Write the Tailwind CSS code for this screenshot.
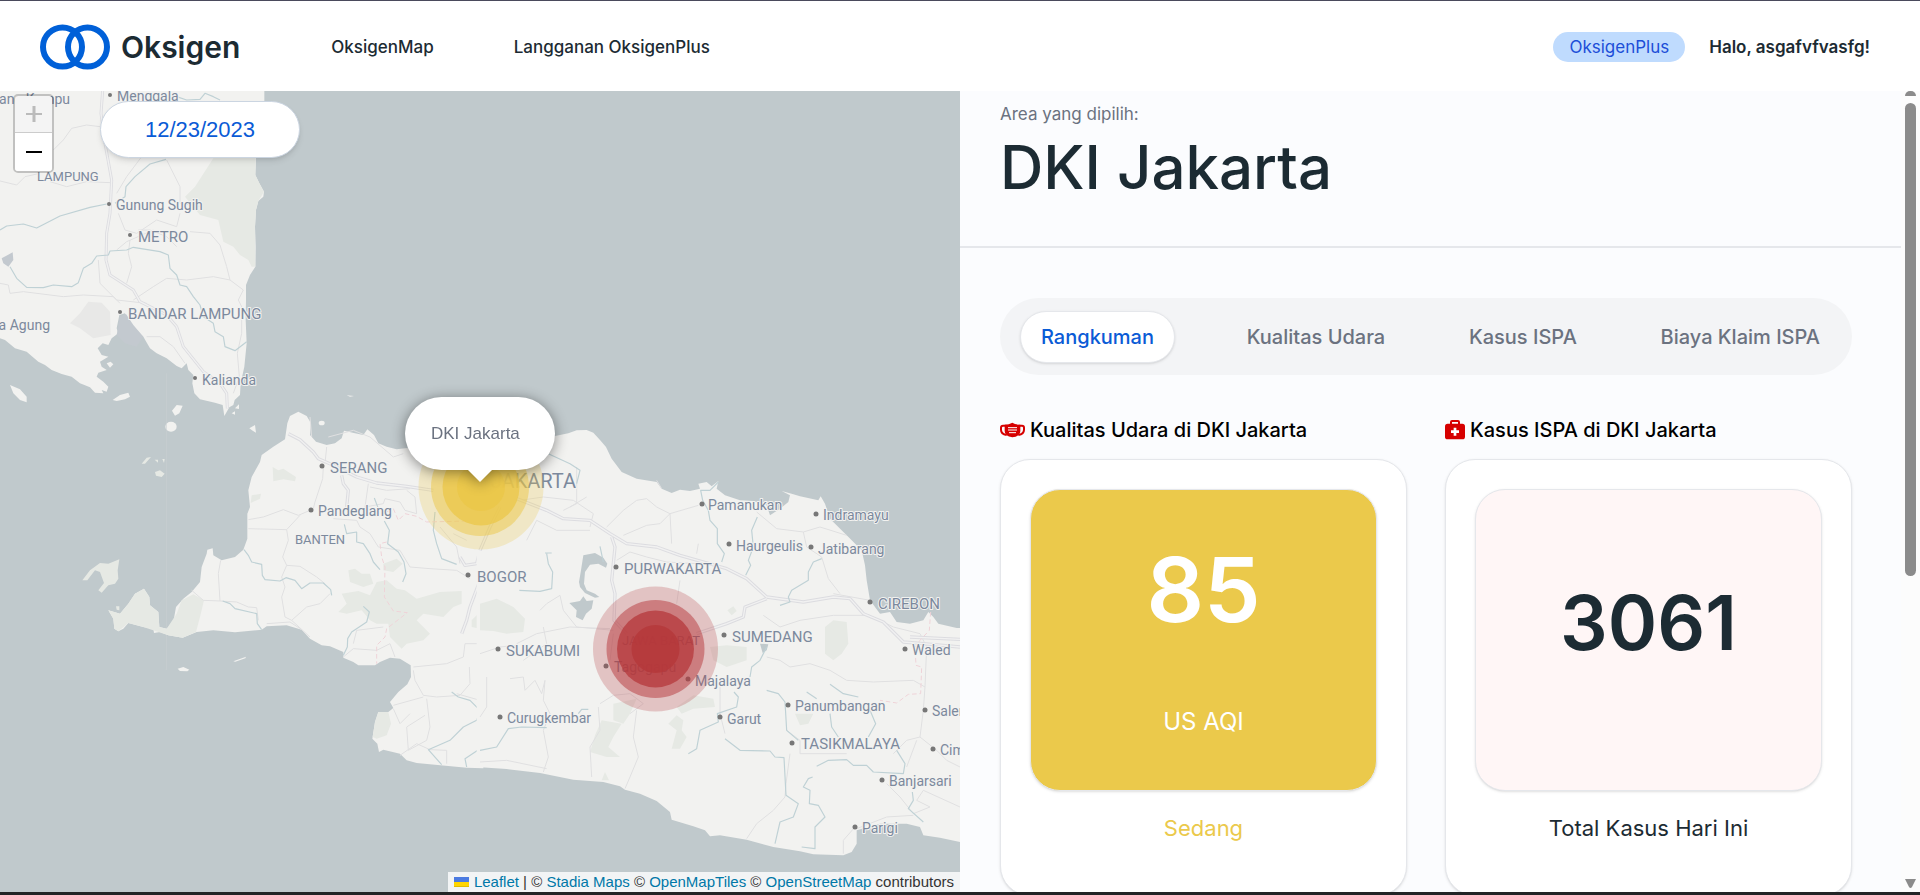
<!DOCTYPE html>
<html lang="id">
<head>
<meta charset="utf-8">
<title>Oksigen</title>
<script src="https://cdn.jsdelivr.net/npm/@tailwindcss/browser@4"></script>
</head>
<body class="flex h-screen flex-col overflow-hidden bg-white font-['Inter',sans-serif] text-[#1c2b33]">

<header class="flex h-[91px] shrink-0 items-center border-t border-[#4a4a5c] bg-white pt-0.5 pr-[50px] pl-10">
  <a href="#" class="flex items-center gap-[11px]">
    <svg class="h-[46px] w-[70px]" viewBox="0 0 70 46" fill="none" stroke="#0060d8" stroke-width="6" aria-hidden="true"><circle cx="22.500" cy="23" r="19.500"/><circle cx="47.500" cy="23" r="19.500"/></svg>
    <span class="text-[30px] leading-9 font-semibold">Oksigen</span>
  </a>
  <nav class="ml-[91px] flex items-center gap-20 text-[17px] leading-6 font-medium">
    <a href="#">OksigenMap</a>
    <a href="#">Langganan OksigenPlus</a>
  </nav>
  <div class="ml-auto flex items-center gap-6 text-[17px]">
    <a href="#" class="rounded-full bg-[#bfdbfe] px-4 leading-[30px] font-normal text-[#1d4ed8]">OksigenPlus</a>
    <span class="leading-[30px] font-semibold">Halo, asgafvfvasfg!</span>
  </div>
</header>

<main class="grid min-h-0 flex-1 grid-cols-2">

  <section class="relative overflow-hidden bg-[#c0c9cc]" aria-label="Peta">
    <svg class="absolute inset-0 h-full w-full" viewBox="0 91 960 801" preserveAspectRatio="xMidYMid slice" aria-label="Peta Jawa Barat dan Lampung">
      <!-- Sumatra -->
      <g transform="scale(.333333)" fill="none" stroke-linejoin="round">
        <path fill="#f2f2f0" d="M0 270H793V310L780 400 768 475 766 525 778 550 792 575 790 590 775 603 768 630 765 680 767 740 766 800 750 825 738 855 738 900 737 960 740 1030 737 1060 733 1100 722 1150 720 1185 704 1200 700 1215 688 1222 673 1248 668 1215 645 1208 600 1198 583 1180 577 1150 580 1125 565 1110 560 1090 545 1105 530 1098 500 1075 470 1060 450 1045 430 1010 400 980 385 965 375 940 358 945 350 985 355 1000 335 1015 325 1035 308 1030 293 1045 305 1065 325 1070 300 1085 305 1100 320 1110 295 1118 290 1130 310 1145 325 1160 320 1175 305 1170 310 1180 285 1178 270 1162 240 1150 215 1130 185 1122 155 1110 135 1095 115 1085 80 1055 45 1045 15 1020 0 1015Z"/>
        <g fill="#f2f2f0"><path d="M30 1155 60 1168 80 1190V1207L60 1200 40 1180ZM338 1200 360 1185 385 1178 390 1190 375 1198 350 1203ZM516 1232 530 1215 548 1217 538 1240 525 1247ZM748 1285 765 1275 768 1298 758 1292ZM1040 1186 1062 1188 1050 1190ZM1480 1267H1487V1271ZM320 1090l12-5 8 8-10 10zM705 1225l12-12v14zM695 1240l10-6v10z"/><ellipse cx="513" cy="1280" rx="17" ry="15"/><ellipse cx="965" cy="1269" rx="9" ry="7"/></g>
        <path fill="#e6e9e4" d="M640 475H767L766 525 778 550 792 575 775 603 768 630 765 680 766 800 755 800 745 780 720 765 700 740 670 725 655 660 600 645 555 590 585 560Z"/>
        <path fill="#e8e8e7" d="M265 905 305 908 330 935 332 1005 280 1015 240 985 210 970 240 940Z"/>
        <path fill="#c3c9cf" d="M5 775 38 757 40 780 25 800 10 790ZM360 950 378 942 400 975 430 1010 410 1040 375 1030 350 1005Z"/>
        <g stroke="#e0e0e1" stroke-width="3">
          <path d="M0 543 50 555 75 530 120 520M0 850 25 855 30 880 70 875 190 890 250 885 340 890 360 910M160 450 190 420 215 385 260 375 300 380M150 545 200 560 260 545 330 548M350 580 380 530 410 490 440 450M500 480 540 560 540 610 600 620M355 640 375 690 410 700 470 660 530 680 540 640M415 690 450 690 500 710 530 740M570 695 630 700 660 735 680 800 690 840 730 870 715 900 735 940M390 720 385 760 395 800 380 850M400 900 460 860 500 835 560 840 640 830 690 840M350 750 380 725 460 690M295 780 300 850 350 900 440 910M440 1010 480 1010 520 1040 555 1090M725 930V1000L712 1060 718 1130 700 1180"/>
        </g>
        <path stroke="#dcdce0" stroke-width="9" d="M308 270 303 340 315 430 335 540 330 640 320 700 318 780 330 825 400 870 420 905 500 945 530 980 550 1040 610 1115 660 1150 680 1180 682 1225"/>
        <path stroke="#f1f1f1" stroke-width="4" d="M308 270 303 340 315 430 335 540 330 640 320 700 318 780 330 825 400 870 420 905 500 945 530 980 550 1040 610 1115 660 1150 680 1180 682 1225"/>
        <g stroke="#bfd1d5" stroke-width="3.500">
          <path d="M0 690 20 678 70 672 110 684 180 648 270 622 320 612 M345 610 375 590 378 560 405 530 450 492 498 478"/>
          <path d="M30 800 50 835 80 862 130 863 160 855 215 860 235 848 250 805 275 790 290 768 325 765 330 753 380 750 400 742 480 755 505 765 510 805 530 825 540 855 560 860 580 890 600 915 610 950 640 970 645 995 670 1010 675 1040 705 1052 740 1025"/>
          <path d="M530 290 560 300 600 298 615 280 640 290 660 300"/>
        </g>
        <path stroke="#c9cfd1" stroke-width="2" d="M499 1120V2010"/>
      </g>
      <!-- West Java -->
      <g transform="translate(0 447) scale(.333333)" fill="none" stroke-linejoin="round">
        <path fill="#f2f2f0" d="M785 24 820 -1 855 -23 862 -71 870 -93 895 -106 920 -93 933 -71 930 -36 948 -16 980 -6 1005 -11 1025 -26 1032 -49 1065 -41 1090 -36 1102 -53 1122 -36 1135 -11 1160 -1 1190 7 1215 4 1300 0H1450V964L1400 962 1250 948 1220 940 1200 920 1150 908 1137 915 1132 890 1117 875 1125 825 1135 795 1165 795 1180 783 1170 765 1195 735 1222 712 1233 690 1232 655 1200 635 1170 632 1140 645 1125 655 1075 655 1060 645 1030 632V615L990 598 965 595 930 575 905 548 860 535 800 538 785 548 705 556 640 550 590 555 548 572 505 565 480 555 462 558 460 545 430 540 385 528 370 545 355 553 343 545 340 515 325 490 360 500 385 470 405 440 432 425 448 450 450 475 475 495 478 540 500 545 520 525 528 480 550 455 575 435 600 405 605 360 620 320 622 308 638 304 640 325 665 340 705 330 730 308 742 275 742 200 750 180 745 130 755 90 780 45Z"/>
        <path fill="#f2f2f0" d="M533 665 550 660 568 668 562 673 540 672ZM700 643 738 629 736 634 706 644Z"/>
        <g fill="#e6e9e4">
          <path d="M247 400 270 370 300 348 325 350 358 337 353 370 355 395 345 410 325 415 305 437 295 430 312 408 300 375 285 370 262 400ZM325 490 360 500 385 470 405 440 432 425 448 450 450 475 475 495 478 540 500 545 530 500 545 460 580 442 612 460 600 510 588 555 548 572 505 565 430 540 385 528 355 553 343 545 340 515ZM425 50 440 32 453 30 435 50ZM465 75 480 70 494 80 485 90 468 86ZM348 478 358 478 358 490 350 488ZM464 38 474 38 474 47ZM487 36 494 36 492 48Z"/>
          <path d="M818 60 835 70 850 65 888 90 885 103 850 97 820 103ZM755 145 783 140 780 155 752 168ZM1045 370 1065 365 1085 380 1110 380 1120 410 1090 420 1050 405ZM1150 350 1190 335 1208 350 1180 375 1150 370ZM1015 495 1040 470 1025 440 1075 432 1110 445 1130 405 1160 400 1190 425 1215 430 1250 455 1320 435 1385 432 1385 470 1360 480 1330 510 1270 500 1250 520 1290 560 1270 580 1220 590 1205 605 1170 570 1165 530 1130 530 1110 520 1085 490 1040 500Z"/>
          <path d="M1135 795 1165 795 1173 830 1160 865 1130 875 1118 870 1125 825ZM1415 520 1440 495V545L1415 540Z"/>
        </g>
        <g stroke="#e0e0e1" stroke-width="3">
          <path d="M970 60 968 95 945 165 940 185M745 218 790 210 850 188 895 205 935 188M745 245 860 248 900 205M860 248 865 280 848 330 860 355 845 390 855 420 845 450 855 510 875 520 920 480 960 470 990 440M860 355 900 358 950 390 975 410M575 430 610 460 660 462 655 380 662 340M660 462 710 465 745 480 770 482 775 520M800 530 870 525 905 548M875 520 930 570M1105 110 1095 180 1150 170 1155 155 1200 165 1215 190 1250 200 1245 150 1220 130M1110 120 1160 130 1230 125M980 0 975 50M985 -30 1060 -50 1110 -30 1180 30 1210 20M935 -30 930 -90M1000 215 1070 220 1080 240 1110 260 1135 300 1200 310 1230 360 1290 365 1370 370 1410 395M1060 590 1070 550 1150 540M1030 630 1060 605 1130 610 1170 590 1185 630M1240 660 1340 650 1390 630 1395 590 1440 590M1240 670 1245 700 1270 745 1310 750 1380 745 1410 710 1408 660M1180 775 1270 750M1280 755 1290 840 1280 880 1225 910 1220 840 1275 805M1180 785 1200 830 1230 800M1200 925 1250 890 1290 908 1340 910V950M1370 740 1440 760M1320 240 1370 300 1380 350M1360 260 1400 280"/>
        </g>
        <path stroke="#dcdce0" stroke-width="10" d="M865 -40 900 -22 940 15 955 35 1000 55 1070 90 1130 108 1220 118 1300 130M1025 85 1030 110 1045 130 1040 180M1380 330 1395 355 1430 350 1440 310M1440 400 1410 480 1400 520 1385 560"/>
        <path stroke="#f1f1f1" stroke-width="4" d="M865 -40 900 -22 940 15 955 35 1000 55 1070 90 1130 108 1220 118 1300 130M1025 85 1030 110 1045 130 1040 180M1380 330 1395 355 1430 350 1440 310M1440 400 1410 480 1400 520 1385 560"/>
        <path stroke="#bfd1d5" stroke-width="3.500" d="M732 308 745 325 755 345 785 352 787 385 795 398 840 402 858 392 885 400 905 425 930 408 970 408 992 428 995 445M668 462 690 470 705 485 770 500 772 530 785 548M1123 153 1135 185M1033 232 1040 260 1070 255 1070 285 1090 290 1110 320 1120 345 1140 368M1153 222 1168 250 1163 290 1195 315 1212 345 1218 380 1208 405M1090 478 1108 495 1100 525 1055 555 1043 575 1042 600 1030 625M1305 195 1300 250 1310 290 1325 335 1370 352M1355 735 1375 750 1410 760 1440 790 1430 820 1390 840 1350 880 1285 908 1325 953M1400 960 1395 935 1440 905"/>
        <path stroke="#efd3d8" stroke-width="3" stroke-dasharray="14 8" d="M1160 195 1180 185 1195 220 1215 200 1250 208 1280 225 1400 222M1160 285 1140 290 1145 330 1155 360 1153 450 1180 492 1222 497 1160 545 1155 570 1130 595 1130 650"/>
      </g>
      <!-- Central and east -->
      <g transform="translate(480 447) scale(.333333)" fill="none" stroke-linejoin="round">
        <path fill="#f2f2f0" d="M-10 0 225 -33 265 -41 290 -50 320 -51 340 -43 360 -21 378 0 395 35 425 75 470 95 530 105 545 125 575 138 600 128 630 132 660 125 655 110 680 105 695 118 715 102 710 125 735 145 780 160 820 162 860 175 870 205 900 185 925 165 930 145 905 132 935 140 960 148 1015 160 1022 148 1035 170 1050 215 1100 265 1145 310 1155 355 1160 400 1170 460 1200 500 1230 495 1250 525 1290 530 1330 520 1345 495 1360 510 1375 530 1430 543H1450V1187L1380 1172 1330 1165 1320 1140 1280 1130 1200 1130 1130 1150V1190L1115 1215 1090 1225 1000 1222 960 1213 880 1200 800 1178 720 1165 690 1168 675 1150 640 1138 575 1118 570 1095 530 1062 480 1040 435 1028 420 1018 370 1005 280 998 180 978 80 966 -10 960Z"/>
        <path fill="#c0c9cc" d="M310 325 345 318 370 332 382 350 378 362 355 350 330 353 315 375 312 410 320 430 345 440 358 450 345 452 315 438 300 420 297 405 303 370ZM268 468 300 462 310 448 320 462 340 460 335 485 318 500 308 520 288 510 290 490ZM840 590 865 592 860 610 848 618Z"/>
        <path fill="#e6e9e4" d="M0 470 50 455 100 480 135 515 130 555 80 560 40 552 0 550ZM1035 540 1060 520 1100 525 1105 590 1085 620 1060 640 1035 620ZM690 600 740 595 800 600 800 640 740 660 700 640ZM742 490 760 478 770 492 755 505ZM400 770 470 755 450 800 430 830 400 820ZM365 820 425 830 400 870 385 900 420 930 380 930 330 915 345 865ZM590 780 640 745 700 755 705 780 640 785 605 800ZM565 830 590 805 610 820 605 850 620 870 600 905 575 905 590 850ZM945 800 1000 800 985 830 960 835ZM365 1000 375 975 387 1000Z"/>
        <path stroke="#e0e0e1" stroke-width="3" d="M380 240 430 190 470 160 500 155 530 180 570 200 575 290M430 265 500 235 540 230 570 200 655 175M530 100 545 125M830 195 890 245 970 255 1020 240 1100 265M970 255 980 300 1025 330 1045 395 1080 440M410 340 450 315 500 330 560 345 650 350M655 290 650 320M120 160 190 150 280 160 340 200 330 240M270 180 320 150M290 60V170L250 190M140 280 170 220 230 250 330 250M180 490 200 470 240 445 250 490 290 540 400 550M110 590 170 560 270 540 390 545M130 640 200 590 190 540M390 640 400 560M0 620 60 600 110 595M20 690 20 780 0 810M90 695 130 690 135 730 165 700 185 740 195 700 190 760 210 800 190 850 205 930 190 975M360 770 400 745 450 740 490 770M355 780 360 850 330 900 335 990M470 790 460 870 475 930 450 990 435 1025M720 720V800L735 860M800 1175 830 1130 880 1090 915 1050 918 1010 930 920M1060 440 1170 460M860 630 900 640 930 660 990 650 1050 670 1100 700 1180 705 1300 700 1335 720M1180 510 1240 540 1320 560 1340 600 1335 720 1330 790 1320 870M850 505 900 540 960 520 1060 505 1170 505M1320 870 1280 880 1240 920M1320 870 1370 910 1400 940 1440 960M1220 1010 1260 1050 1300 1100M1300 1100 1350 1080 1310 1060 1330 1030 1440 1080M1090 1220 1090 1180 1125 1140M1130 1145 1220 1110 1300 1105M0 945 80 940 200 965M920 850 960 880 960 920 1100 920M1310 880 1280 960M490 770 450 800M600 400 590 470"/>
        <path stroke="#dcdce0" stroke-width="10" d="M110 155 200 190 250 215 330 220 390 260 440 290 530 300 600 325 740 365 800 395 860 450 970 465 1060 450 1110 455 1150 500 1210 525 1270 585 1330 590 1440 600M395 270 405 300 395 400 405 440 402 520 440 560M860 455 795 480 790 510 740 530 650 560M1290 570 1440 577M0 310 30 240 60 180"/>
        <path stroke="#f1f1f1" stroke-width="4" d="M110 155 200 190 250 215 330 220 390 260 440 290 530 300 600 325 740 365 800 395 860 450 970 465 1060 450 1110 455 1150 500 1210 525 1270 585 1330 590 1440 600M395 270 405 300 395 400 405 440 402 520 440 560M860 455 795 480 790 510 740 530 650 560M1290 570 1440 577M0 310 30 240 60 180"/>
        <path stroke="#bfd1d5" stroke-width="3.500" d="M205 20 270 50 300 70 290 110M195 318 215 318M200 320 205 350 218 375 215 425 180 433 118 430M360 298 370 345M715 105 690 130 662 130 668 160 685 190 690 220 712 245 712 290 733 320 725 345M832 210 815 250 820 300 805 340 812 355 797 385M1025 335 1000 345 985 375 985 400 935 430 925 450 930 465 900 475M860 600 840 640 815 660 810 690M762 735 775 750 770 780 712 800 715 825 660 850 650 905 625 920M735 875 780 910 870 912 885 930 912 932 918 1045 955 1070 940 1110 900 1125 885 1190M860 730 895 740 915 765 920 850 955 880M980 735 1010 755M1050 712 1090 740 1135 750M1050 800 1055 840 1075 870M1170 790 1187 830 1165 870M1010 958 1045 940 1100 938 1120 955 1160 955 1180 975 1270 980 1275 950 1250 910M998 990 985 995 970 1020 990 1030 988 1070 1015 1075 1035 1110 1005 1140 1005 1205 965 1200M1297 1035 1300 1060 1285 1085 1330 1125M0 910 50 900 85 845 125 840 200 842M295 800 305 787 325 787"/>
        <path stroke="#efd3d8" stroke-width="3" stroke-dasharray="14 8" d="M1352 495 1348 550 1320 580 1305 600 1308 655 1325 660 1322 740 1285 742 1250 768 1200 760"/>
      </g>
      <!-- Place names, 1 unit = 1px -->
      <g font-family="Roboto, sans-serif" fill="#7c899d" stroke="#f2f2f0" stroke-width="2" stroke-linejoin="round" paint-order="stroke" font-size="14">
        <text x="70" y="104" text-anchor="end">ang Kampu</text>
        <text x="117" y="101">Menggala</text>
        <text x="37" y="181" font-size="13">LAMPUNG</text>
        <text x="116" y="210">Gunung Sugih</text>
        <text x="50" y="330" text-anchor="end">ta Agung</text>
        <text x="202" y="385">Kalianda</text>
        <text x="318" y="516">Pandeglang</text>
        <text x="295" y="544" font-size="13">BANTEN</text>
        <text x="708" y="510">Pamanukan</text>
        <text x="823" y="520">Indramayu</text>
        <text x="736" y="551">Haurgeulis</text>
        <text x="818" y="554">Jatibarang</text>
        <text x="912" y="655">Waled</text>
        <text x="695" y="686">Majalaya</text>
        <text x="614" y="672">Tagogapu</text>
        <text x="622" y="645" font-size="13">JAWA BARAT</text>
        <text x="507" y="723">Curugkembar</text>
        <text x="727" y="724">Garut</text>
        <text x="795" y="711">Panumbangan</text>
        <text x="932" y="716">Salem</text>
        <text x="940" y="755">Cimanggu</text>
        <text x="889" y="786">Banjarsari</text>
        <text x="862" y="833">Parigi</text>
        <g font-size="15">
          <text x="138" y="242">METRO</text>
          <text x="128" y="319">BANDAR LAMPUNG</text>
          <text x="330" y="473">SERANG</text>
          <text x="477" y="582">BOGOR</text>
          <text x="624" y="574">PURWAKARTA</text>
          <text x="878" y="609">CIREBON</text>
          <text x="732" y="642">SUMEDANG</text>
          <text x="506" y="656">SUKABUMI</text>
          <text x="801" y="749">TASIKMALAYA</text>
        </g>
        <text x="576" y="488" font-size="20" text-anchor="end">JAKARTA</text>
      </g>
      <g fill="#777">
        <circle cx="110" cy="95" r="2"/><circle cx="109" cy="204" r="2"/><circle cx="130" cy="235" r="2"/><circle cx="120" cy="312" r="2"/><circle cx="195" cy="378" r="2"/><circle cx="322" cy="466" r="2.500"/><circle cx="311" cy="510" r="2.500"/><circle cx="468" cy="575" r="2.500"/><circle cx="702" cy="504" r="2.500"/><circle cx="816" cy="514" r="2.500"/><circle cx="729" cy="544" r="2.500"/><circle cx="811" cy="547" r="2.500"/><circle cx="616" cy="567" r="2.500"/><circle cx="870" cy="602" r="2.500"/><circle cx="724" cy="635" r="2.500"/><circle cx="905" cy="649" r="2.500"/><circle cx="498" cy="649" r="2.500"/><circle cx="606" cy="666" r="2.500"/><circle cx="688" cy="679" r="2.500"/><circle cx="500" cy="717" r="2.500"/><circle cx="720" cy="717" r="2.500"/><circle cx="788" cy="705" r="2.500"/><circle cx="925" cy="710" r="2.500"/><circle cx="933" cy="749" r="2.500"/><circle cx="792" cy="743" r="2.500"/><circle cx="882" cy="780" r="2.500"/><circle cx="855" cy="827" r="2.500"/>
      </g>
      <!-- Pollution markers -->
      <g fill="#ebc748"><circle cx="481" cy="487" r="62.500" opacity=".25"/><circle cx="480" cy="487" r="49" opacity=".5"/><circle cx="481" cy="487" r="38.500" opacity=".75"/><circle cx="481" cy="487" r="24" opacity=".8"/></g>
      <g fill="#b5383b"><circle cx="655.500" cy="649" r="62.500" opacity=".25"/><circle cx="655.500" cy="649" r="49" opacity=".5"/><circle cx="655.500" cy="649" r="38.500" opacity=".75"/><circle cx="655.500" cy="649" r="24" opacity=".85"/></g>
    </svg>

    <div class="absolute top-[3px] left-[13px] flex w-[41px] flex-col overflow-hidden rounded-[5px] border-2 border-black/20 bg-clip-padding">
      <button type="button" disabled aria-label="Perbesar" class="flex h-[37px] items-center justify-center border-b border-[#ccc] bg-[#f4f4f4]"><svg class="size-4" viewBox="0 0 16 16" fill="#bbb"><path d="M0 7h16v2H0zM6.500 0h3v16h-3z"/></svg></button>
      <button type="button" aria-label="Perkecil" class="flex h-[38px] items-center justify-center bg-white"><svg class="size-4" viewBox="0 0 16 16"><path d="M0 7h16v2H0z"/></svg></button>
    </div>

    <input type="text" value="12/23/2023" aria-label="Tanggal" class="absolute top-[10px] left-[100px] h-[57px] w-[200px] rounded-full border border-[#cbd5e1] bg-white text-center font-['Liberation_Sans',sans-serif] text-[22px] text-[#0a5bd6] shadow-md">

    <div class="absolute top-[306px] left-[405px] drop-shadow-[0_2px_7px_rgba(0,0,0,0.45)]">
      <div class="flex h-[73px] w-[150px] items-center rounded-full bg-white pl-[26px] font-['Liberation_Sans',sans-serif] text-[17px] text-[#6b7280]">DKI Jakarta</div>
      <svg class="mx-auto block h-3 w-6" viewBox="0 0 24 12" fill="#fff" aria-hidden="true"><path d="M0 0h24L12 12z"/></svg>
    </div>

    <div class="absolute right-0 bottom-0 flex h-5 items-center bg-white/80 px-[6px] font-['Liberation_Sans',sans-serif] text-[15px] whitespace-pre text-[#333]"><svg class="mr-[5px] h-[10px] w-[15px]" viewBox="0 0 15 10" aria-hidden="true"><path fill="#4c7be1" d="M0 0h15v5H0z"/><path fill="#ffd500" d="M0 5h15v4H0z"/><path fill="#e0bc00" d="M0 9h15v1H0z"/></svg><a href="#" class="text-[#0078a8]">Leaflet</a> | © <a href="#" class="text-[#0078a8]">Stadia Maps</a> © <a href="#" class="text-[#0078a8]">OpenMapTiles</a> © <a href="#" class="text-[#0078a8]">OpenStreetMap</a> contributors</div>
  </section>

  <section class="flex overflow-hidden bg-[#fbfcfe]">
    <div class="min-w-0 flex-1">
      <div class="border-b-2 border-[#e5e7eb] pt-[11px] pb-[42px] pl-10">
        <p class="text-[17px] leading-6 font-normal text-[#6b7280]">Area yang dipilih:</p>
        <h1 class="mt-1 text-[60px] leading-[74px] font-medium">DKI Jakarta</h1>
      </div>

      <div class="pt-[50px] pr-[49px] pl-10">
        <div role="tablist" class="flex h-[77px] items-center justify-between rounded-full bg-[#f3f4f6] px-5 text-[20px] font-medium text-[#6b7280]">
          <button type="button" role="tab" aria-selected="true" class="h-[52px] rounded-full border border-[#e5e7eb] bg-white px-5 text-[#0a5bd6] shadow-sm">Rangkuman</button>
          <button type="button" role="tab" aria-selected="false" class="px-3">Kualitas Udara</button>
          <button type="button" role="tab" aria-selected="false" class="px-3">Kasus ISPA</button>
          <button type="button" role="tab" aria-selected="false" class="px-3">Biaya Klaim ISPA</button>
        </div>

        <div class="mt-10 grid grid-cols-2 gap-[38px]">
          <article>
            <h2 class="flex items-center gap-[5px] text-[20px] leading-[30px] font-medium text-black">
              <svg class="h-4 w-[25px]" viewBox="0 0 75 48" aria-hidden="true"><path d="M20 11H9Q3 11 3 17V23Q3 36 20 39M55 11H66Q72 11 72 17V23Q72 36 55 39" fill="none" stroke="#d60000" stroke-width="6"/><path fill="#d60000" d="M14 8Q27 8 37 2 47 8 61 8V27Q61 43 37 46 14 43 14 27Z"/><path stroke="#fff" stroke-width="3" d="M24 17H51M24 24H51M27 32H48"/></svg>
              Kualitas Udara di DKI Jakarta
            </h2>
            <div class="mt-[14px] flex flex-col items-center rounded-[30px] border border-[#e5e7eb] bg-white p-[29px] pb-[51px] shadow-sm">
              <div class="flex h-[302px] w-full flex-col items-center rounded-[30px] border border-[#e5e7eb] bg-[#ebc94b] pt-[45px] text-white shadow-sm">
                <p class="text-[90px] leading-[110px] font-semibold">85</p>
                <p class="mt-[61px] text-[24px] leading-8 font-normal">US AQI</p>
              </div>
              <p class="mt-[21px] text-[22px] leading-8 font-normal text-[#ebc94b]">Sedang</p>
            </div>
          </article>
          <article>
            <h2 class="flex items-center gap-[5px] text-[20px] leading-[30px] font-medium text-black">
              <svg class="h-5 w-5" viewBox="0 0 60 60" aria-hidden="true"><path d="M18 14V6Q18 3 21 3H39Q42 3 42 6V14" fill="none" stroke="#d60000" stroke-width="6"/><rect y="11" width="60" height="47" rx="8" fill="#d60000"/><path stroke="#fff" stroke-width="8" d="M30 23V47M18 35H42"/></svg>
              Kasus ISPA di DKI Jakarta
            </h2>
            <div class="mt-[14px] flex flex-col items-center rounded-[30px] border border-[#e5e7eb] bg-white p-[29px] pb-[51px] shadow-sm">
              <div class="flex h-[302px] w-full flex-col items-center rounded-[30px] border border-[#e5e7eb] bg-[#fff6f6] pt-[87px] shadow-sm">
                <p class="text-[75px] leading-[92px] font-semibold">3061</p>
              </div>
              <p class="mt-[21px] text-[22px] leading-8 font-normal">Total Kasus Hari Ini</p>
            </div>
          </article>
        </div>
      </div>
    </div>

    <div class="flex w-[19px] shrink-0 flex-col items-center bg-[#fcfcfc]" aria-hidden="true">
      <div class="h-[5px] w-[11px] rounded-t-full bg-[#8b8b8b]"></div>
      <div class="mt-[7px] h-[473px] w-[11px] rounded-full bg-[#8b8b8b]"></div>
      <svg class="mt-auto mb-1 h-[9px] w-[11px]" viewBox="0 0 11 9" fill="#8b8b8b"><path d="M0 0h11L7 8Q5.500 10 4 8Z"/></svg>
    </div>
  </section>
</main>
<footer class="h-[3px] shrink-0 bg-[#222426]"></footer>
</body>
</html>
